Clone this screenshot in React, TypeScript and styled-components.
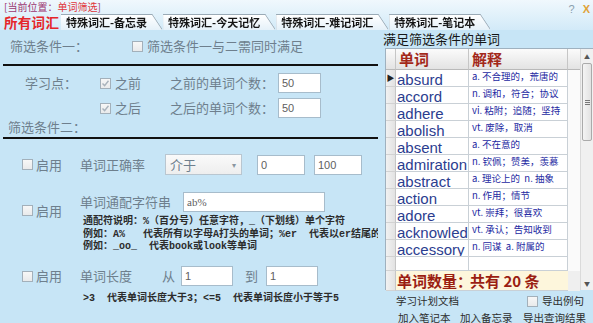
import React from "react";
import styled, { createGlobalStyle } from "styled-components";

type WordItem = {
  word: string;
  meaning: string;
};

const words: WordItem[] = [
  { word: "absurd", meaning: "a. 不合理的，荒唐的" },
  { word: "accord", meaning: "n. 调和，符合；协议" },
  { word: "adhere", meaning: "vi. 粘附；追随；坚持" },
  { word: "abolish", meaning: "vt. 废除，取消" },
  { word: "absent", meaning: "a. 不在意的" },
  { word: "admiration", meaning: "n. 钦佩；赞美，羡慕" },
  { word: "abstract", meaning: "a. 理论上的  n. 抽象" },
  { word: "action", meaning: "n. 作用；情节" },
  { word: "adore", meaning: "vt. 崇拜；很喜欢" },
  { word: "acknowledge", meaning: "vt. 承认；告知收到" },
  { word: "accessory", meaning: "n. 同谋  a. 附属的" },
];

const tabs = ["特殊词汇-备忘录", "特殊词汇-今天记忆", "特殊词汇-难记词汇", "特殊词汇-笔记本"];

const GlobalStyle = createGlobalStyle`
  html, body {
    margin: 0;
    padding: 0;
    background: #c7e5f6;
  }
  body {
    font-family: "Noto Sans CJK SC", "Noto Sans", sans-serif;
  }
`;

// small square checkbox drawn like the old winforms one
const CheckBox: React.FC<{ checked?: boolean }> = ({ checked }) => (
  <Box>
    {checked && (
      <svg width="9" height="9" viewBox="0 0 9 9">
        <path d="M1.5 4.5 L3.6 6.6 L7.5 1.8" fill="none" stroke="#a9b3bc" strokeWidth="1.4" />
      </svg>
    )}
  </Box>
);

const App: React.FC = () => {
  return (
    <Window>
      <GlobalStyle />
      <Header>
        <TopLine>
          <Location>
            [当前位置：<em>单词筛选</em>]
          </Location>
          <WinControls>
            <HelpMark>?</HelpMark>
            <CloseMark>X</CloseMark>
          </WinControls>
        </TopLine>
        <TabStrip>
          <ActiveTab>所有词汇</ActiveTab>
          {tabs.map((t) => (
            <TabShape key={t}>
              <TabFace>{t}</TabFace>
            </TabShape>
          ))}
        </TabStrip>
      </Header>

      <Body>
        <LeftPanel>
          <SimpleRow>
            <Label $w={132} $pad={10}>筛选条件一：</Label>
            <CheckLabel>
              <CheckBox />
              <Label>筛选条件一与二需同时满足</Label>
            </CheckLabel>
          </SimpleRow>
          <Divider $top={8} />

          <StudyGrid>
            <Label>学习点：</Label>
            <CheckLabel>
              <CheckBox checked />
              <Label>之前</Label>
            </CheckLabel>
            <Label>之前的单词个数：</Label>
            <Field $w={43} defaultValue="50" readOnly />
            <span />
            <CheckLabel>
              <CheckBox checked />
              <Label>之后</Label>
            </CheckLabel>
            <Label>之后的单词个数：</Label>
            <Field $w={43} defaultValue="50" readOnly />
          </StudyGrid>

          <SubTitle>筛选条件二：</SubTitle>
          <Divider $top={1} />

          <FilterRow $top={15}>
            <EnableCell $top={0}>
              <CheckBox />
              <Label>启用</Label>
            </EnableCell>
            <FilterContent>
              <InlineLine>
                <Label $w={85}>单词正确率</Label>
                <Select>
                  介于<Caret>▾</Caret>
                </Select>
                <Field $w={48} $ml={15} defaultValue="0" readOnly />
                <Field $w={48} $ml={9} defaultValue="100" readOnly />
              </InlineLine>
            </FilterContent>
          </FilterRow>

          <FilterRow $top={17}>
            <EnableCell $top={8}>
              <CheckBox />
              <Label>启用</Label>
            </EnableCell>
            <FilterContent>
              <InlineLine $h={20}>
                <Label $w={103}>单词通配字符串</Label>
                <Field $w={142} $serif defaultValue="ab%" readOnly />
              </InlineLine>
              <Explain>
                <ExplainLine>通配符说明：%（百分号）任意字符，_（下划线）单个字符</ExplainLine>
                <ExplainLine>例如：A%   代表所有以字母A打头的单词；%er  代表以er结尾的单词</ExplainLine>
                <ExplainLine>例如：_oo_  代表book或look等单词</ExplainLine>
              </Explain>
            </FilterContent>
          </FilterRow>

          <FilterRow $top={12}>
            <EnableCell $top={0}>
              <CheckBox />
              <Label>启用</Label>
            </EnableCell>
            <FilterContent>
              <InlineLine>
                <Label $w={82}>单词长度</Label>
                <Label $w={19}>从</Label>
                <Field $w={52} defaultValue="1" readOnly />
                <Label $w={21} $ml={12}>到</Label>
                <Field $w={52} defaultValue="1" readOnly />
              </InlineLine>
            </FilterContent>
          </FilterRow>
          <NoteLine>&gt;3  代表单词长度大于3；&lt;=5  代表单词长度小于等于5</NoteLine>
        </LeftPanel>

        <RightPanel>
          <ListTitle>满足筛选条件的单词</ListTitle>
          <GridFrame>
            <Table>
              <GridRow $h={21}>
                <HeadCell />
                <HeadCell>单词</HeadCell>
                <HeadCell>解释</HeadCell>
                <HeadCell $last />
              </GridRow>
              {words.map((w, i) => (
                <GridRow key={w.word} $h={17}>
                  <RowHead>{i === 0 && <Pointer>▶</Pointer>}</RowHead>
                  <WordCell>{w.word}</WordCell>
                  <MeaningCell>{w.meaning}</MeaningCell>
                  <BlankCell />
                </GridRow>
              ))}
              <GridRow $h={14}>
                <RowHead />
                <WordCell />
                <MeaningCell />
                <BlankCell />
              </GridRow>
              <GridRow $h={19}>
                <RowHead />
                <CountCell>单词数量：</CountCell>
                <CountCell>共有 20 条</CountCell>
                <BlankCell $gray />
              </GridRow>
            </Table>
            <ScrollBar>
              <ScrollArrow>▲</ScrollArrow>
              <Thumb>
                <Grip />
              </Thumb>
              <ScrollSpacer />
              <ScrollArrow>▼</ScrollArrow>
            </ScrollBar>
          </GridFrame>

          <BottomRow $top={3}>
            <SmallText $w={131}>学习计划文档</SmallText>
            <CheckLabel>
              <CheckBox />
              <SmallText>导出例句</SmallText>
            </CheckLabel>
          </BottomRow>
          <BottomRow $top={1} $pad={15}>
            <SmallText $w={62}>加入笔记本</SmallText>
            <SmallText $w={63}>加入备忘录</SmallText>
            <SmallText>导出查询结果</SmallText>
          </BottomRow>
        </RightPanel>
      </Body>
    </Window>
  );
};

export default App;

const Window = styled.div`
  width: 593px;
  height: 323px;
  overflow: hidden;
  background: #c7e5f6;
  display: flex;
  flex-direction: column;
`;

const Header = styled.div`
  height: 30px;
  flex-shrink: 0;
  background: linear-gradient(#f0f8fd, #d2eaf8);
  display: flex;
  flex-direction: column;
`;

const TopLine = styled.div`
  height: 14px;
  display: flex;
  justify-content: space-between;
  align-items: center;
  padding: 0 3px 0 4px;
`;

const Location = styled.span`
  font-size: 10px;
  line-height: 12px;
  color: #9c3670;

  em {
    font-style: normal;
    color: #e0363a;
  }
`;

const WinControls = styled.div`
  display: flex;
  align-items: center;
  gap: 8px;
  margin-top: 4px;
  font-family: "Liberation Sans", sans-serif;
  font-size: 11px;
  font-weight: 700;
`;

const HelpMark = styled.span`
  color: #8aa0ae;
  font-weight: 400;
`;

const CloseMark = styled.span`
  color: #e0a236;
`;

const TabStrip = styled.div`
  height: 16px;
  display: flex;
  align-items: flex-end;
  padding-left: 4px;
`;

const ActiveTab = styled.div`
  width: 57px;
  height: 16px;
  font-size: 13.5px;
  font-weight: 700;
  line-height: 17px;
  color: #e5262a;
  letter-spacing: 0.3px;
`;

const TabShape = styled.div`
  margin-right: 1px;
  filter: drop-shadow(0.7px 0 0 #8c9ca8) drop-shadow(0 -0.7px 0 #9aaab6);
`;

const TabFace = styled.div`
  height: 15px;
  padding: 0 15px 0 5px;
  font-size: 11px;
  font-weight: 700;
  line-height: 15px;
  color: #141414;
  white-space: nowrap;
  background: linear-gradient(#ffffff, #e5f1f9);
  clip-path: polygon(0 0, calc(100% - 10px) 0, 100% 100%, 0 100%);
`;

const Body = styled.div`
  flex: 1;
  display: flex;
  min-height: 0;
`;

const LeftPanel = styled.div`
  width: 383px;
  flex-shrink: 0;
  display: flex;
  flex-direction: column;
  padding-top: 6px;
  box-sizing: border-box;
  overflow: hidden;
`;

const Label = styled.span<{ $w?: number; $pad?: number; $ml?: number }>`
  display: inline-block;
  font-size: 13px;
  line-height: 18px;
  color: #6e7f8d;
  white-space: nowrap;
  flex-shrink: 0;
  box-sizing: border-box;
  ${(p) => (p.$w ? `width: ${p.$w}px;` : "")}
  ${(p) => (p.$pad ? `padding-left: ${p.$pad}px;` : "")}
  ${(p) => (p.$ml ? `margin-left: ${p.$ml}px;` : "")}
`;

const SimpleRow = styled.div`
  height: 20px;
  display: flex;
  align-items: center;
`;

const CheckLabel = styled.span`
  display: inline-flex;
  align-items: center;
  gap: 4px;
`;

const Box = styled.span`
  width: 11px;
  height: 11px;
  flex-shrink: 0;
  box-sizing: border-box;
  border: 1px solid #a3b0ba;
  background: linear-gradient(#f7f7f7, #e9eaeb);
  display: inline-flex;
  align-items: center;
  justify-content: center;
`;

const Divider = styled.div<{ $top: number }>`
  height: 2px;
  background: #111;
  margin: ${(p) => p.$top}px 5px 0 3px;
  flex-shrink: 0;
`;

const StudyGrid = styled.div`
  display: grid;
  grid-template-columns: 75px 70px 108px 43px;
  grid-auto-rows: 20px;
  row-gap: 5px;
  align-items: center;
  padding-left: 25px;
  margin-top: 7px;
`;

const Field = styled.input<{ $w: number; $ml?: number; $serif?: boolean }>`
  width: ${(p) => p.$w}px;
  height: 20px;
  box-sizing: border-box;
  margin: 0 0 0 ${(p) => p.$ml || 0}px;
  padding: 0 3px;
  border: 1px solid #a7bccb;
  background: #fff;
  outline: none;
  font-family: ${(p) => (p.$serif ? '"Liberation Serif", serif' : '"Liberation Sans", sans-serif')};
  font-size: 11px;
  color: #606060;
  flex-shrink: 0;
`;

const SubTitle = styled.div`
  height: 18px;
  padding-left: 8px;
  font-size: 13px;
  line-height: 18px;
  color: #6e7f8d;
`;

const FilterRow = styled.div<{ $top: number }>`
  display: flex;
  align-items: flex-start;
  padding-left: 22px;
  margin-top: ${(p) => p.$top}px;
`;

const EnableCell = styled.div<{ $top: number }>`
  width: 58px;
  height: 21px;
  flex-shrink: 0;
  display: flex;
  align-items: center;
  gap: 3px;
  margin-top: ${(p) => p.$top}px;
`;

const FilterContent = styled.div`
  width: 298px;
  display: flex;
  flex-direction: column;
  overflow: hidden;
`;

const InlineLine = styled.div<{ $h?: number }>`
  height: ${(p) => p.$h || 21}px;
  display: flex;
  align-items: center;
`;

const Select = styled.div`
  width: 77px;
  height: 21px;
  box-sizing: border-box;
  flex-shrink: 0;
  display: flex;
  align-items: center;
  justify-content: space-between;
  padding: 0 5px 0 4px;
  border: 1px solid #b9c6d0;
  background: linear-gradient(#fafafa, #eeeeee);
  font-size: 13px;
  color: #6e7f8d;
`;

const Caret = styled.span`
  font-size: 8px;
  color: #8a96a0;
`;

const Explain = styled.div`
  margin-top: 4px;
  margin-left: 3px;
`;

const ExplainLine = styled.div`
  font-family: "Liberation Mono", "Noto Sans CJK SC", monospace;
  font-size: 10px;
  font-weight: 700;
  line-height: 12.5px;
  color: #2c2c2c;
  white-space: pre;
`;

const NoteLine = styled(ExplainLine)`
  margin-top: 6px;
  padding-left: 83px;
  line-height: 12px;
`;

const RightPanel = styled.div`
  flex: 1;
  display: flex;
  flex-direction: column;
  min-width: 0;
`;

const ListTitle = styled.div`
  height: 18px;
  flex-shrink: 0;
  font-size: 13px;
  line-height: 18px;
  color: #151515;
  white-space: nowrap;
`;

const GridFrame = styled.div`
  height: 242px;
  flex-shrink: 0;
  margin-left: 2px;
  display: flex;
  border-top: 1px solid #9fb1bf;
  border-left: 1px solid #9fb1bf;
  box-sizing: border-box;
  background: #fff;
`;

const Table = styled.div`
  flex: 1;
  display: flex;
  flex-direction: column;
  min-width: 0;
`;

const GridRow = styled.div<{ $h: number }>`
  height: ${(p) => p.$h}px;
  flex-shrink: 0;
  display: grid;
  grid-template-columns: 10px 73px 99px 1fr;
`;

const HeadCell = styled.div<{ $last?: boolean }>`
  box-sizing: border-box;
  background: linear-gradient(#fbfbfb, #e3e3e3);
  border-right: ${(p) => (p.$last ? "none" : "1px solid #c6c6c6")};
  border-bottom: 1px solid #b9b9b9;
  padding-left: 3px;
  font-size: 15px;
  font-weight: 700;
  line-height: 20px;
  color: #a3281a;
`;

const RowHead = styled.div`
  box-sizing: border-box;
  background: linear-gradient(90deg, #f2f2f2, #e2e2e2);
  border-right: 1px solid #c6c6c6;
  border-bottom: 1px solid #d2d2d2;
  display: flex;
  align-items: center;
  justify-content: center;
`;

const Pointer = styled.span`
  font-size: 8px;
  color: #222;
  line-height: 1;
`;

const WordCell = styled.div`
  box-sizing: border-box;
  border-right: 1px solid #c9d0d6;
  border-bottom: 1px solid #c9d0d6;
  padding-left: 1px;
  font-family: "Liberation Sans", sans-serif;
  font-size: 15px;
  line-height: 19px;
  color: #2b3d8f;
  white-space: nowrap;
  overflow: hidden;
`;

const MeaningCell = styled.div`
  box-sizing: border-box;
  border-right: 1px solid #c9d0d6;
  border-bottom: 1px solid #c9d0d6;
  padding-left: 3px;
  font-size: 9.5px;
  line-height: 13px;
  color: #2429a2;
  white-space: pre;
  overflow: hidden;
`;

const BlankCell = styled.div<{ $gray?: boolean }>`
  background: ${(p) => (p.$gray ? "#efefef" : "#fafafa")};
`;

const CountCell = styled.div`
  box-sizing: border-box;
  background: #fdf6dc;
  border-bottom: 1px solid #c9d0d6;
  padding-left: 1px;
  font-size: 15px;
  font-weight: 700;
  line-height: 19px;
  color: #9b1e12;
  white-space: nowrap;
`;

const ScrollBar = styled.div`
  width: 12px;
  flex-shrink: 0;
  display: flex;
  flex-direction: column;
  background: #f0f0f0;
  border-left: 1px solid #dadada;
`;

const ScrollArrow = styled.div`
  height: 14px;
  display: flex;
  align-items: center;
  justify-content: center;
  font-size: 6px;
  color: #555;
`;

const Thumb = styled.div`
  height: 78px;
  margin: 0 1px;
  box-sizing: border-box;
  border: 1px solid #aaaaaa;
  border-radius: 2px;
  background: linear-gradient(90deg, #f4f4f4, #e2e2e2);
  display: flex;
  align-items: center;
  justify-content: center;
`;

const Grip = styled.div`
  width: 5px;
  height: 5px;
  border-top: 1px solid #777;
  border-bottom: 1px solid #777;
  box-sizing: border-box;
  background: linear-gradient(#777, #777) center / 100% 1px no-repeat;
`;

const ScrollSpacer = styled.div`
  flex: 1;
`;

const BottomRow = styled.div<{ $top: number; $pad?: number }>`
  height: 16px;
  flex-shrink: 0;
  display: flex;
  align-items: center;
  margin-top: ${(p) => p.$top}px;
  padding-left: ${(p) => p.$pad || 13}px;
`;

const SmallText = styled.span<{ $w?: number }>`
  display: inline-block;
  font-size: 10.5px;
  line-height: 14px;
  color: #2d2d2d;
  white-space: nowrap;
  ${(p) => (p.$w ? `width: ${p.$w}px;` : "")}
`;
